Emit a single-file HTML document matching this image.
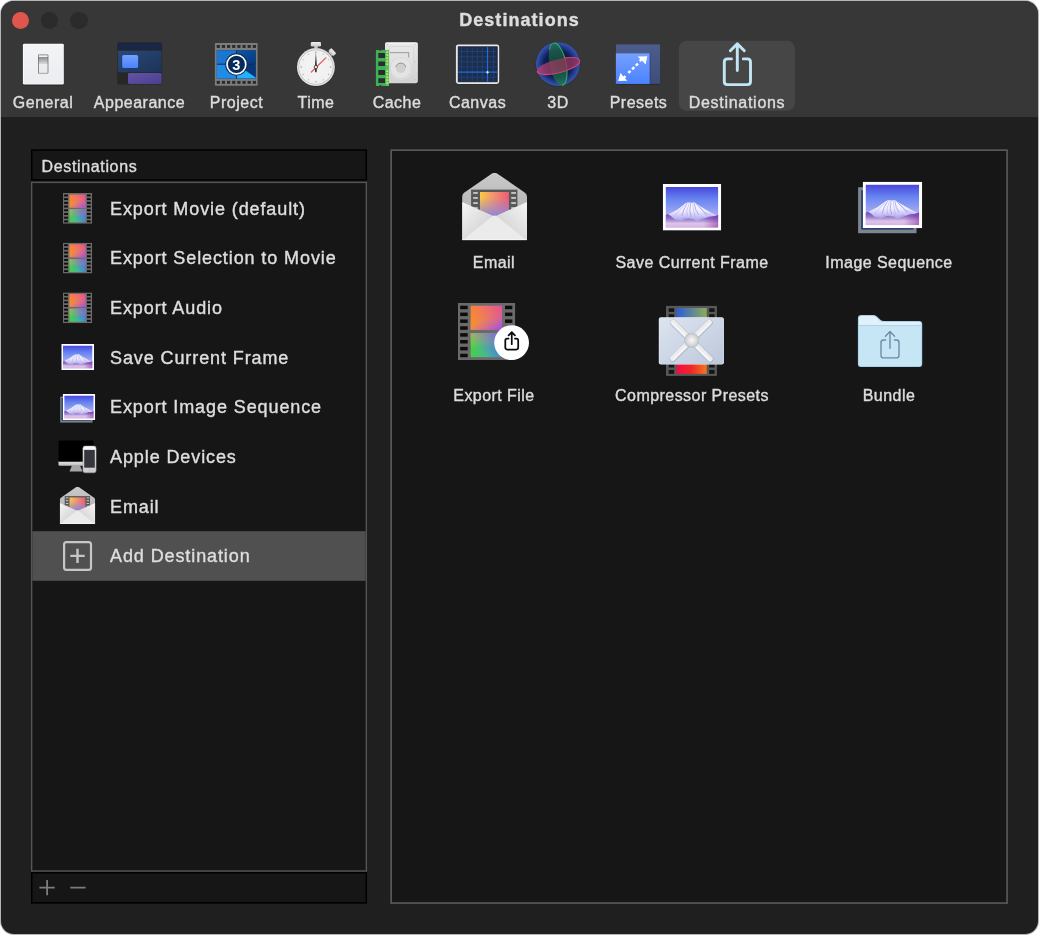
<!DOCTYPE html>
<html lang="en">
<head>
<meta charset="utf-8">
<title>Destinations</title>
<style>
html,body{margin:0;padding:0;}
body{width:1040px;height:936px;background:#fff;overflow:hidden;position:relative;
  font-family:"Liberation Sans",sans-serif;color:#dddddd;-webkit-text-stroke:.4px #dcdcdc;}
.win{position:absolute;left:1px;top:1px;width:1037px;height:933px;border-radius:13px;
  background:#1f1f1f;overflow:hidden;will-change:transform;box-shadow:0 0 0 1px rgba(120,120,120,.55);}
.abs{position:absolute;}
.toolbar{position:absolute;left:0;top:0;width:1037px;height:116px;}
.tl{position:absolute;top:10.5px;width:17.5px;height:17.5px;border-radius:50%;background:#2b2b2b;}
.title{position:absolute;left:0;width:1037px;top:8px;text-align:center;font-weight:bold;font-size:18px;
  line-height:22px;color:#dedede;letter-spacing:1.05px;}
.tlabel{position:absolute;top:92px;width:140px;margin-left:-70px;text-align:center;font-size:16px;line-height:20px;
  color:#dcdcdc;letter-spacing:.5px;white-space:nowrap;}
.sel{position:absolute;left:678px;top:40px;width:116px;height:70px;border-radius:8px;background:#464646;}
.hdr{position:absolute;left:31.5px;top:149.5px;width:333px;height:29px;}
.hdr span{position:absolute;left:9px;top:6px;font-size:16px;line-height:20px;letter-spacing:.45px;color:#dcdcdc;}
.list{position:absolute;left:31.5px;top:182.5px;width:333px;height:687px;}
.row{position:absolute;left:0;width:333px;height:49.7px;}
.row.on{}
.row .t{position:absolute;left:77.5px;top:13px;font-size:18px;line-height:24px;color:#dedede;white-space:nowrap;letter-spacing:.9px;}
.ftr{position:absolute;left:31.5px;top:872.5px;width:333px;height:29px;}
.right{position:absolute;left:391px;top:150px;width:614px;height:751px;}
.glabel{position:absolute;width:220px;margin-left:-110px;text-align:center;font-size:16px;line-height:20px;color:#dcdcdc;
  letter-spacing:.45px;white-space:nowrap;}
svg{position:absolute;overflow:visible;}
</style>
</head>
<body>
<div class="win">
  <svg class="bg" width="1040" height="936" viewBox="0 0 1040 936" style="left:-1px;top:-1px;">
    <rect x="0" y="0" width="1040" height="117" fill="#373737"/>
    <rect x="678.8" y="40.8" width="116.2" height="70" rx="8" fill="#464646"/>
    <rect x="31.75" y="150.05" width="334.55" height="29.9" fill="#161616" stroke="#000000" stroke-width="1.5"/>
    <rect x="31.65" y="182.4" width="334.7" height="688.6" fill="#161616" stroke="#555555" stroke-width="1.4"/>
    <rect x="32.35" y="531.2" width="333.3" height="49.6" fill="#505050"/>
    <rect x="31.75" y="872.75" width="334.55" height="30.15" fill="#161616" stroke="#000000" stroke-width="1.5"/>
    <rect x="391.15" y="150.15" width="615.9" height="752.9" fill="#161616" stroke="#575757" stroke-width="1.7"/>
  </svg>
  <div class="toolbar">
    <div class="tl" style="left:10.7px;background:#e0554e;"></div>
    <div class="tl" style="left:39.9px;"></div>
    <div class="tl" style="left:69.1px;"></div>
    <div class="title">Destinations</div>
    <!--TOOLBAR-ICONS-->
    <div class="tlabel" style="left:42px;">General</div>
    <div class="tlabel" style="left:138.5px;">Appearance</div>
    <div class="tlabel" style="left:235.5px;">Project</div>
    <div class="tlabel" style="left:315px;">Time</div>
    <div class="tlabel" style="left:396px;">Cache</div>
    <div class="tlabel" style="left:476.5px;">Canvas</div>
    <div class="tlabel" style="left:557px;">3D</div>
    <div class="tlabel" style="left:637.5px;">Presets</div>
    <div class="tlabel" style="left:736px;letter-spacing:.72px;">Destinations</div>
  </div>

  <div class="hdr"><span style="letter-spacing:.65px;">Destinations</span></div>
  <div class="list">
    <div class="row" style="top:0px;"><div class="t">Export Movie (default)</div></div>
    <div class="row" style="top:49.7px;"><div class="t">Export Selection to Movie</div></div>
    <div class="row" style="top:99.4px;"><div class="t">Export Audio</div></div>
    <div class="row" style="top:149.1px;"><div class="t">Save Current Frame</div></div>
    <div class="row" style="top:198.8px;"><div class="t">Export Image Sequence</div></div>
    <div class="row" style="top:248.5px;"><div class="t">Apple Devices</div></div>
    <div class="row" style="top:298.2px;"><div class="t">Email</div></div>
    <div class="row on" style="top:347.9px;"><div class="t">Add Destination</div></div>
    <!--LIST-ICONS-->
  </div>
  <div class="ftr">
    <!--FOOTER-ICONS-->
  </div>

  <div class="right">
    <!--GRID-ICONS-->
    <div class="glabel" style="left:102px;top:101.5px;">Email</div>
    <div class="glabel" style="left:300px;top:101.5px;">Save Current Frame</div>
    <div class="glabel" style="left:497px;top:101.5px;">Image Sequence</div>
    <div class="glabel" style="left:102px;top:235px;">Export File</div>
    <div class="glabel" style="left:300px;top:235px;">Compressor Presets</div>
    <div class="glabel" style="left:497px;top:235px;">Bundle</div>
  </div>
<svg class="ov" width="1040" height="936" viewBox="0 0 1040 936" style="left:-1px;top:-1px;">
<defs>
  <linearGradient id="gPlate" x1="0" y1="0" x2="0" y2="1"><stop offset="0" stop-color="#f3f4f6"/><stop offset="1" stop-color="#ebedf0"/></linearGradient>
  <linearGradient id="gSw" x1="0" y1="0" x2="0" y2="1"><stop offset="0" stop-color="#fafafa"/><stop offset=".07" stop-color="#f4f4f4"/><stop offset=".1" stop-color="#8a8d90"/><stop offset=".48" stop-color="#d4d7d9"/><stop offset=".5" stop-color="#ececec"/><stop offset="1" stop-color="#eaeaea"/></linearGradient>
  <linearGradient id="gApMid" x1="0" y1="0" x2="1" y2="1"><stop offset="0" stop-color="#284a78"/><stop offset="1" stop-color="#1c3358"/></linearGradient>
  <linearGradient id="gBlue" x1="0" y1="0" x2="0" y2="1"><stop offset="0" stop-color="#76a0ff"/><stop offset="1" stop-color="#4a82ff"/></linearGradient>
  <linearGradient id="gPurp" x1="0" y1="0" x2="1" y2="1"><stop offset="0" stop-color="#6453a4"/><stop offset="1" stop-color="#4b3f90"/></linearGradient>
  <linearGradient id="gPrBack" x1="0" y1="0" x2="0" y2="1"><stop offset="0" stop-color="#4c5d8c"/><stop offset="1" stop-color="#3d4d7c"/></linearGradient>
  <linearGradient id="gTR" x1="0" y1="0" x2="1" y2="1"><stop offset="0" stop-color="#0d58a8"/><stop offset="1" stop-color="#063878"/></linearGradient>
  <radialGradient id="gSph" cx=".5" cy=".5" r=".5"><stop offset="0" stop-color="#081036"/><stop offset=".62" stop-color="#0f1d54"/><stop offset=".88" stop-color="#2a4498"/><stop offset="1" stop-color="#3856b6"/></radialGradient>
  <linearGradient id="gGreenE" x1="0" y1="0" x2="0" y2="1"><stop offset="0" stop-color="#266c54" stop-opacity=".8"/><stop offset=".5" stop-color="#124c36" stop-opacity=".85"/><stop offset="1" stop-color="#237a54" stop-opacity=".8"/></linearGradient>
  <linearGradient id="gPinkE" x1="0" y1="0" x2="1" y2="0"><stop offset="0" stop-color="#b84074" stop-opacity=".78"/><stop offset=".5" stop-color="#8c3c5a" stop-opacity=".78"/><stop offset="1" stop-color="#9c305c" stop-opacity=".78"/></linearGradient>
  <radialGradient id="gFace" cx=".5" cy=".5" r=".5"><stop offset="0" stop-color="#f4f4f4"/><stop offset=".86" stop-color="#f0f0f0"/><stop offset=".9" stop-color="#c4c4c4"/><stop offset=".95" stop-color="#e6e6e6"/><stop offset="1" stop-color="#c8c8c8"/></radialGradient>
  <linearGradient id="gKnob" x1="0" y1="0" x2="0" y2="1"><stop offset="0" stop-color="#f2f2f2"/><stop offset="1" stop-color="#c8c8c8"/></linearGradient>
  <linearGradient id="gHdd" x1="0" y1="0" x2="0" y2="1"><stop offset="0" stop-color="#e8e8e8"/><stop offset="1" stop-color="#d2d2d2"/></linearGradient>
  <linearGradient id="gHdd2" x1="0" y1="0" x2="0" y2="1"><stop offset="0" stop-color="#e6e6e6"/><stop offset="1" stop-color="#dadada"/></linearGradient>
  <!-- film frames -->
  <linearGradient id="gFt1" x1="0" y1="0" x2="1" y2="0"><stop offset="0" stop-color="#fd8036"/><stop offset=".45" stop-color="#f06e6e"/><stop offset="1" stop-color="#e24e98"/></linearGradient>
  <linearGradient id="gFt2" x1=".2" y1="0" x2=".9" y2="1"><stop offset="0" stop-color="#ff9030" stop-opacity="0"/><stop offset=".45" stop-color="#d060b0" stop-opacity="0"/><stop offset="1" stop-color="#a24ee8" stop-opacity="1"/></linearGradient>
  <linearGradient id="gFt3" x1="0" y1="0" x2="0" y2="1"><stop offset="0" stop-color="#e8a020" stop-opacity="0"/><stop offset="1" stop-color="#e8a828" stop-opacity=".55"/></linearGradient>
  <linearGradient id="gFb1" x1="0" y1="0" x2="1" y2="0"><stop offset="0" stop-color="#46d048"/><stop offset=".5" stop-color="#48b890"/><stop offset="1" stop-color="#3a96c8"/></linearGradient>
  <linearGradient id="gFb2" x1="0" y1="0" x2="0" y2="1"><stop offset="0" stop-color="#c8c838" stop-opacity=".9"/><stop offset=".6" stop-color="#c8c838" stop-opacity="0"/></linearGradient>
  <linearGradient id="gFb3" x1="1" y1="0" x2=".3" y2=".7"><stop offset="0" stop-color="#7060e8" stop-opacity="1"/><stop offset="1" stop-color="#6070e0" stop-opacity="0"/></linearGradient>
  <!-- photo -->
  <linearGradient id="gSky" x1="0" y1="0" x2="0" y2="1"><stop offset="0" stop-color="#4848de"/><stop offset=".3" stop-color="#6684f0"/><stop offset=".62" stop-color="#9ca4f4"/><stop offset="1" stop-color="#c8b4f0"/></linearGradient>
  <linearGradient id="gHill" x1="0" y1="0" x2="0" y2="1"><stop offset="0" stop-color="#6650b8"/><stop offset=".35" stop-color="#9474c8"/><stop offset=".7" stop-color="#dcc4e8"/><stop offset="1" stop-color="#d8b4e0"/></linearGradient>
  <linearGradient id="gHillR" x1="0" y1="0" x2="1" y2="0"><stop offset=".72" stop-color="#8028a0" stop-opacity="0"/><stop offset="1" stop-color="#802aa0" stop-opacity=".55"/></linearGradient>
  <linearGradient id="gSnow" x1="0" y1="0" x2="0" y2="1"><stop offset="0" stop-color="#ffffff"/><stop offset=".5" stop-color="#eeecff"/><stop offset="1" stop-color="#b4acea"/></linearGradient>
  <!-- envelope -->
  <linearGradient id="gEnvBack" x1="0" y1="0" x2="0" y2="1"><stop offset="0" stop-color="#cacaca"/><stop offset="1" stop-color="#a4a4a4"/></linearGradient>
  <linearGradient id="gEnvL" x1="0" y1="0" x2="1" y2="1"><stop offset="0" stop-color="#f6f6f6"/><stop offset="1" stop-color="#c6c6c6"/></linearGradient>
  <linearGradient id="gEnvR" x1="1" y1="0" x2="0" y2="1"><stop offset="0" stop-color="#f6f6f6"/><stop offset="1" stop-color="#c6c6c6"/></linearGradient>
  <linearGradient id="gEnvImg" x1="0" y1="0" x2="1" y2="0"><stop offset="0" stop-color="#fcc844"/><stop offset=".5" stop-color="#f09070"/><stop offset="1" stop-color="#f05a74"/></linearGradient>
  <linearGradient id="gEnvImg2" x1="0" y1="0" x2="0" y2="1"><stop offset=".2" stop-color="#9488d8" stop-opacity="0"/><stop offset=".95" stop-color="#8e86da" stop-opacity="1"/></linearGradient>
  <!-- compressor -->
  <linearGradient id="gCpl" x1="0" y1="0" x2="1" y2="1"><stop offset="0" stop-color="#dde4f0"/><stop offset="1" stop-color="#bcc8dc"/></linearGradient>
  <linearGradient id="gCtop" x1="0" y1="0" x2="1" y2="0"><stop offset="0" stop-color="#2c5cd8"/><stop offset="1" stop-color="#8cac58"/></linearGradient>
  <linearGradient id="gCbot" x1="0" y1="0" x2="1" y2="0"><stop offset="0" stop-color="#f00c44"/><stop offset=".5" stop-color="#f02828"/><stop offset="1" stop-color="#f07820"/></linearGradient>
  <linearGradient id="gArm" x1="0" y1="0" x2="0" y2="1"><stop offset="0" stop-color="#fafafa"/><stop offset=".5" stop-color="#e6e6e6"/><stop offset="1" stop-color="#c2c6cc"/></linearGradient>
  <radialGradient id="gHub" cx=".5" cy=".5" r=".5"><stop offset="0" stop-color="#f8f8f8"/><stop offset=".7" stop-color="#d8d8d8"/><stop offset="1" stop-color="#c0c4c8"/></radialGradient>
  <!-- monitor -->
  <linearGradient id="gChin" x1="0" y1="0" x2="0" y2="1"><stop offset="0" stop-color="#e8e8e8"/><stop offset="1" stop-color="#bcbcbc"/></linearGradient>
  <linearGradient id="gPhone" x1="0" y1="0" x2="0" y2="1"><stop offset="0" stop-color="#fafafa"/><stop offset="1" stop-color="#c8c8c8"/></linearGradient>

  <!-- film symbol: 58x57 -->
  <symbol id="film" viewBox="0 0 58 57" preserveAspectRatio="none">
    <rect x="0" y="0" width="58" height="57" fill="#6a6a6a"/>
    <g fill="#0c0c0c">
      <rect x="2.2" y="2.8" width="7.6" height="3.5"/><rect x="2.2" y="9.65" width="7.6" height="3.5"/><rect x="2.2" y="16.5" width="7.6" height="3.5"/><rect x="2.2" y="23.35" width="7.6" height="3.5"/><rect x="2.2" y="30.2" width="7.6" height="3.5"/><rect x="2.2" y="37.05" width="7.6" height="3.5"/><rect x="2.2" y="43.9" width="7.6" height="3.5"/><rect x="2.2" y="50.75" width="7.6" height="3.5"/>
      <rect x="47.6" y="2.8" width="7.4" height="3.5"/><rect x="47.6" y="9.65" width="7.4" height="3.5"/><rect x="47.6" y="16.5" width="7.4" height="3.5"/><rect x="47.6" y="23.35" width="7.4" height="3.5"/><rect x="47.6" y="30.2" width="7.4" height="3.5"/><rect x="47.6" y="37.05" width="7.4" height="3.5"/><rect x="47.6" y="43.9" width="7.4" height="3.5"/><rect x="47.6" y="50.75" width="7.4" height="3.5"/>
    </g>
    <rect x="12.8" y="2.8" width="31.8" height="24.2" fill="url(#gFt1)"/>
    <rect x="12.8" y="2.8" width="31.8" height="24.2" fill="url(#gFt3)"/>
    <rect x="12.8" y="2.8" width="31.8" height="24.2" fill="url(#gFt2)"/>
    <rect x="12.8" y="30.2" width="31.8" height="24" fill="url(#gFb1)"/>
    <rect x="12.8" y="30.2" width="31.8" height="24" fill="url(#gFb2)"/>
    <rect x="12.8" y="30.2" width="31.8" height="24" fill="url(#gFb3)"/>
  </symbol>

  <!-- photo symbol: 58.4 x 46.7 -->
  <symbol id="photo" viewBox="0 0 58.4 46.7" preserveAspectRatio="none">
    <rect x="0" y="0" width="58.4" height="46.7" fill="#ffffff"/>
    <rect x="3" y="3.1" width="52.3" height="40.5" fill="url(#gSky)"/>
    <path d="M3 43.6 V31.2 L5.2 30.2 L8 32 L12 35.5 L18 36.5 L24 34.5 L30 35 L34 37 L40 35 L46 33 L52 32 L55.3 31 V43.6 Z" fill="url(#gHill)"/>
    <path d="M3 43.6 V31.2 L5.2 30.2 L8 32 L12 35.5 L18 36.5 L24 34.5 L30 35 L34 37 L40 35 L46 33 L52 32 L55.3 31 V43.6 Z" fill="url(#gHillR)"/>
    <path d="M5.5 30.3 L14 26 L22.5 19.6 L24.6 18.7 L30 18.9 L31.4 18.4 L33.5 19.8 L41 24.5 L48 28.5 L54.2 31.3 L50 32.2 L46 32.2 L42.5 33.6 L39.5 33 L36.5 34.8 L33.6 35.8 L31.5 34 L29 34.6 L26.5 33.2 L23.5 34.2 L21 33 L17.5 35.2 L14 34.6 L11.5 34.6 L8.5 32 Z" fill="url(#gSnow)"/>
    <path d="M24.6 19 L21 26 L19 32 M28 19 L27 27 L28.5 33 M31.4 18.6 L33 26 L36 31 M33.5 20 L40 27 L44 31.5" stroke="#9c98e6" stroke-width=".9" fill="none" opacity=".85"/>
    <path d="M22.5 20.5 L15 28 L11 33 M30 19 L30.5 25 L32.5 33.5 M26.5 19 L24 27 L24.5 33 M36 22 L42 28.5 L48 31.5" stroke="#b4b0ee" stroke-width=".8" fill="none" opacity=".8"/>
  </symbol>

  <!-- envelope symbol: 65 x 67.6 -->
  <symbol id="env" viewBox="0 0 65 67.6" preserveAspectRatio="none">
    <path d="M0 24 Q0 21.4 2 20 L29.6 1 Q32.5 -1 35.4 1 L63 20 Q65 21.4 65 24 V67.6 H0 Z" fill="url(#gEnvBack)"/>
    <rect x="9" y="16.9" width="46.4" height="35" fill="#585858"/>
    <g fill="#c4c4c4"><rect x="11.1" y="19.3" width="4.6" height="1.9"/><rect x="11.1" y="24.3" width="4.6" height="1.9"/><rect x="11.1" y="29.4" width="4.6" height="1.9"/><rect x="11.1" y="34.4" width="4.6" height="1.9"/>
    <rect x="49.2" y="19.3" width="4.7" height="1.9"/><rect x="49.2" y="24.3" width="4.7" height="1.9"/><rect x="49.2" y="29.4" width="4.7" height="1.9"/><rect x="49.2" y="34.4" width="4.7" height="1.9"/></g>
    <rect x="17.9" y="19.3" width="29" height="26" fill="url(#gEnvImg)"/>
    <rect x="17.9" y="19.3" width="29" height="26" fill="url(#gEnvImg2)"/>
    <path d="M0 29.3 L34 44.5 L0 67.6 Z" fill="url(#gEnvL)"/>
    <path d="M65 29.3 L31 44.5 L65 67.6 Z" fill="url(#gEnvR)"/>
    <path d="M0.3 67.6 L30 43.8 Q32.5 41.6 35 43.8 L64.7 67.6 Z" fill="#ebebeb"/>
    <rect x="0" y="66.6" width="65" height="1" fill="#f8f8f8"/>
  </symbol>
</defs>
<!-- ===== toolbar icons ===== -->
<g id="ic-general">
  <rect x="22.9" y="44.6" width="40.9" height="40.8" rx="1.4" fill="#1c1c1c" opacity=".8"/>
  <rect x="22.9" y="43.8" width="40.9" height="40.8" rx="1.4" fill="#ffffff"/>
  <rect x="23.7" y="44.6" width="39.3" height="39.2" rx="1.2" fill="url(#gPlate)"/>
  <rect x="38" y="54.6" width="10.4" height="19" rx=".8" fill="#6f7276"/>
  <rect x="38.8" y="55.3" width="8.8" height="17.6" fill="url(#gSw)"/>
</g>
<g id="ic-appearance">
  <rect x="117.2" y="42.3" width="44.9" height="42.3" rx="2.2" fill="#272727"/>
  <path d="M117.8 44.6 Q117.8 42.9 119.6 42.9 H159.8 Q161.6 42.9 161.6 44.6 V49.6 H117.8 Z" fill="#182746"/>
  <rect x="117.8" y="50.7" width="43.8" height="21.5" rx="1" fill="url(#gApMid)"/>
  <rect x="122.2" y="54.9" width="15.9" height="13.1" rx="1.6" fill="url(#gBlue)"/>
  <rect x="128" y="73.1" width="33.6" height="10.8" rx="1.4" fill="url(#gPurp)"/>
</g>
<g id="ic-project">
  <rect x="214.9" y="42.9" width="42.7" height="42.8" rx=".8" fill="#7c7c7c"/>
  <g fill="#2a2a2a">
    <rect x="216.7" y="45" width="3.2" height="2.9"/><rect x="221.85" y="45" width="3.2" height="2.9"/><rect x="227" y="45" width="3.2" height="2.9"/><rect x="232.15" y="45" width="3.2" height="2.9"/><rect x="237.3" y="45" width="3.2" height="2.9"/><rect x="242.45" y="45" width="3.2" height="2.9"/><rect x="247.6" y="45" width="3.2" height="2.9"/><rect x="252.75" y="45" width="3.2" height="2.9"/>
    <rect x="216.7" y="80.9" width="3.2" height="2.9"/><rect x="221.85" y="80.9" width="3.2" height="2.9"/><rect x="227" y="80.9" width="3.2" height="2.9"/><rect x="232.15" y="80.9" width="3.2" height="2.9"/><rect x="237.3" y="80.9" width="3.2" height="2.9"/><rect x="242.45" y="80.9" width="3.2" height="2.9"/><rect x="247.6" y="80.9" width="3.2" height="2.9"/><rect x="252.75" y="80.9" width="3.2" height="2.9"/>
  </g>
  <rect x="216.8" y="50.3" width="38.9" height="28.3" fill="#0a2c5c"/>
  <rect x="216.8" y="50.3" width="19.1" height="13.4" fill="#1a76cf"/>
  <rect x="236.9" y="50.3" width="18.8" height="13.4" fill="url(#gTR)"/>
  <rect x="216.8" y="64.7" width="19.1" height="13.9" fill="#1f8ce6"/>
  <rect x="236.9" y="64.7" width="18.8" height="13.9" fill="#073878"/>
  <path d="M236.9 78.6 V70.5 H245.5 L255.7 77.6 V78.6 Z" fill="#22b0ff"/>
  <circle cx="236.4" cy="64.4" r="11.2" fill="#0a2c5c"/>
  <circle cx="236.4" cy="64.4" r="9.4" fill="#082a5a" stroke="#ffffff" stroke-width="1.7"/>
  <text x="236.4" y="69.7" text-anchor="middle" font-family="Liberation Sans, sans-serif" font-weight="bold" font-size="14.5" fill="#ffffff">3</text>
</g>
<g id="ic-time">
  <rect x="314.3" y="45.5" width="3.4" height="4" fill="#c8c8c8"/>
  <rect x="310.8" y="42" width="10.2" height="4.6" rx="1.3" fill="url(#gKnob)"/>
  <g transform="rotate(47.5 315.9 67.1)"><rect x="313.4" y="44.6" width="5" height="5" fill="#c4c4c4"/><rect x="312.2" y="42.8" width="7.4" height="4.2" rx="1" fill="url(#gKnob)"/></g>
  <circle cx="315.9" cy="67.3" r="19.4" fill="#2a2a2a"/>
  <circle cx="315.9" cy="67.1" r="19" fill="url(#gFace)"/>
  <g fill="#a8a8a8">
    <circle cx="315.9" cy="52.4" r=".8"/><circle cx="323.25" cy="54.37" r=".6"/><circle cx="328.63" cy="59.75" r=".6"/><circle cx="330.6" cy="67.1" r=".8"/><circle cx="328.63" cy="74.45" r=".6"/><circle cx="323.25" cy="79.83" r=".6"/><circle cx="315.9" cy="81.8" r=".8"/><circle cx="308.55" cy="79.83" r=".6"/><circle cx="303.17" cy="74.45" r=".6"/><circle cx="301.2" cy="67.1" r=".8"/><circle cx="303.17" cy="59.75" r=".6"/><circle cx="308.55" cy="54.37" r=".6"/>
  </g>
  <path d="M311.4 72 L325.8 57.9" stroke="#ee5858" stroke-width="1.3" stroke-linecap="round"/>
  <path d="M315.9 52.2 L317 67 L316.7 72.2 H315.1 L314.8 67 Z" fill="#3a3a3a"/>
  <circle cx="315.9" cy="67.1" r="1.7" fill="#e8e8e8" stroke="#3a3a3a" stroke-width=".9"/>
</g>
<g id="ic-cache">
  <rect x="385" y="42.3" width="32.9" height="41" rx="2.2" fill="url(#gHdd)"/>
  <rect x="385.4" y="42.7" width="32.1" height="1" rx=".5" fill="#f8f8f8"/>
  <path d="M389.5 47.8 Q389.5 46.5 390.8 46.5 H412.4 Q413.7 46.5 413.7 47.8 V67 Q413.7 80.5 400.8 80.5 Q389.5 80.5 389.5 67 Z" fill="url(#gHdd2)" stroke="#cfcfcf" stroke-width=".6"/>
  <path d="M389.8 52.6 H408.6 V57.5" stroke="#a8a8a8" stroke-width="1.3" fill="none"/>
  <circle cx="400.8" cy="68" r="10.6" fill="#e4e4e4" stroke="#d0d0d0" stroke-width=".6"/>
  <circle cx="400.8" cy="68" r="5" fill="#cfcfcf"/>
  <path d="M395.9 67.2 A5 5 0 0 1 405.7 67.2" stroke="#8c8c8c" stroke-width=".9" fill="none"/>
  <g fill="#b8b8b8"><circle cx="387.3" cy="44.5" r=".6"/><circle cx="415.2" cy="44.5" r=".6"/><circle cx="415.2" cy="62" r=".6"/><circle cx="415.2" cy="79.8" r=".6"/></g>
  <path d="M375.9 49.9 H379.2 L379.7 50.8 H381 L381.5 49.9 H388.9 V86 H381.5 L381 85.1 H379.7 L379.2 86 H375.9 Z" fill="#3cb155"/>
  <rect x="385.6" y="49.9" width="3.3" height="36.1" fill="#52c463"/>
  <g fill="#2b2b2b"><rect x="378.3" y="53.1" width="6.7" height="4.9" rx=".4"/><rect x="378.3" y="61.4" width="6.7" height="4.7" rx=".4"/><rect x="378.3" y="70.1" width="6.7" height="4.9" rx=".4"/><rect x="378.3" y="78.2" width="6.7" height="4.9" rx=".4"/></g>
  <g fill="#d8dc58"><rect x="386.3" y="51.3" width="2" height="1.7"/><rect x="386.3" y="54.3" width="2" height="1.7"/><rect x="386.3" y="57.3" width="2" height="1.7"/><rect x="386.3" y="60.3" width="2" height="1.7"/><rect x="386.3" y="63.3" width="2" height="1.7"/><rect x="386.3" y="70.3" width="2" height="1.7"/><rect x="386.3" y="73.3" width="2" height="1.7"/><rect x="386.3" y="76.3" width="2" height="1.7"/><rect x="386.3" y="79.3" width="2" height="1.7"/><rect x="386.3" y="82.3" width="2" height="1.7"/></g>
</g>
<g id="ic-canvas">
  <rect x="455.9" y="45.1" width="43.3" height="39.5" rx="2.4" fill="#222" opacity=".7"/>
  <rect x="455.9" y="44.4" width="43.3" height="39.5" rx="2.4" fill="#e7e7e7"/>
  <rect x="458.2" y="46.8" width="39" height="35" fill="#1d2e4b"/>
  <g stroke="#244f96" stroke-width=".9" opacity=".6">
    <path d="M461.5 46.8 V81.8 M467.2 46.8 V81.8 M472.3 46.8 V81.8 M477.4 46.8 V81.8 M482.4 46.8 V81.8 M493.5 46.8 V81.8"/>
    <path d="M458.2 51.5 H497.2 M458.2 56.7 H497.2 M458.2 61.8 H497.2 M458.2 67 H497.2 M458.2 77.3 H497.2"/>
  </g>
  <rect x="458.2" y="46.8" width="39" height="35" fill="none" stroke="#101c34" stroke-width=".8"/>
  <path d="M487.5 46.8 V81.8 M458.2 72.2 H497.2" stroke="#1a6be4" stroke-width="1.2"/>
  <ellipse cx="487.5" cy="72.2" rx="1" ry="1.3" fill="#e8f0ff"/>
</g>
<g id="ic-3d">
  <circle cx="557.9" cy="64.3" r="22.3" fill="#2a2a2a"/>
  <circle cx="557.9" cy="64.1" r="21.9" fill="url(#gSph)"/>
  <g transform="rotate(-11.5 557.9 64.3)">
    <ellipse cx="557.9" cy="64.3" rx="8.2" ry="21.6" fill="url(#gGreenE)"/>
    <path d="M557.9 42.7 A8.2 21.6 0 0 1 557.9 85.9" fill="none" stroke="#30bc54" stroke-width=".95"/>
    <path d="M557.9 42.7 A8.2 21.6 0 0 0 552.5 48" fill="none" stroke="#30bc54" stroke-width=".95"/>
  </g>
  <g transform="rotate(-14 558.3 66)">
    <ellipse cx="558.3" cy="66" rx="22" ry="6.8" fill="url(#gPinkE)"/>
    <path d="M536.3 66 A22 6.8 0 0 0 580.3 66 A22 6.8 0 0 0 566 59.6" fill="none" stroke="#ea4874" stroke-width=".95"/>
  </g>
</g>
<g id="ic-presets">
  <rect x="615.9" y="45" width="44.1" height="39.6" fill="#1e1e1e" opacity=".7"/>
  <rect x="615.9" y="44.4" width="44.1" height="39.5" fill="url(#gPrBack)"/>
  <rect x="615.9" y="53.4" width="33.9" height="30.5" fill="url(#gBlue)"/>
  <rect x="649.8" y="53.4" width=".8" height="30.5" fill="#35446c"/>
  <g fill="#ffffff">
    <path d="M647.3 56.2 L637.7 56.5 L640.2 58.9 L638.9 60.2 L640.6 62 L642 60.6 L645.6 64.4 Z"/>
    <path d="M618.1 80.9 L627.4 80.8 L625 78.4 L626.4 77 L624.6 75.2 L623.2 76.6 L620.6 72.8 Z"/>
    <rect x="-1.25" y="-1.5" width="2.5" height="3" transform="translate(636.9 64.6) rotate(45)"/>
    <rect x="-1.25" y="-1.5" width="2.5" height="3" transform="translate(633.2 68.2) rotate(45)"/>
    <rect x="-1.25" y="-1.5" width="2.5" height="3" transform="translate(629.4 71.9) rotate(45)"/>
  </g>
</g>
<g id="ic-dest" fill="none" stroke="#c3e6f4" stroke-width="2.9" stroke-linecap="round" stroke-linejoin="round">
  <path d="M731.5 58.9 H727.4 Q724.3 58.9 724.3 62 V81.5 Q724.3 84.6 727.4 84.6 H747.4 Q750.5 84.6 750.5 81.5 V62 Q750.5 58.9 747.4 58.9 H743.3"/>
  <path d="M737.3 70.6 V44.2 M730.3 50.7 L737.3 43.7 L744.3 50.7"/>
</g>
<!-- ===== list icons ===== -->
<use href="#film" x="63" y="193" width="29.2" height="30.8"/>
<use href="#film" x="63" y="242.7" width="29.2" height="30.8"/>
<use href="#film" x="63" y="292.4" width="29.2" height="30.8"/>
<use href="#photo" x="61.3" y="344" width="32.7" height="26.1"/>
<g id="ic-seq-s">
  <rect x="60.2" y="396.6" width="32.3" height="26" fill="#7a8088"/>
  <rect x="61.6" y="398" width="29.5" height="22.5" fill="#1c3868"/>
  <use href="#photo" x="62.7" y="394" width="32.5" height="26"/>
</g>
<g id="ic-devices">
  <path d="M69.5 471.6 L72 465.5 H80 L82.5 471.6 Z" fill="#a6a6a6"/>
  <path d="M58.5 461 H93.6 V464.4 Q93.6 465.8 92.2 465.8 H59.9 Q58.5 465.8 58.5 464.4 Z" fill="url(#gChin)"/>
  <path d="M58.5 441.8 Q58.5 440.4 59.9 440.4 H92.2 Q93.6 440.4 93.6 441.8 V461.7 H58.5 Z" fill="#000000"/>
  <rect x="82.9" y="446" width="13.2" height="26.8" rx="2.2" fill="url(#gPhone)" stroke="#9a9a9a" stroke-width=".5"/>
  <rect x="84.2" y="449.9" width="10.6" height="17.8" fill="#34383e"/>
  <circle cx="89.5" cy="470.3" r="1" fill="#d0d0d0" stroke="#a8a8a8" stroke-width=".3"/>
</g>
<use href="#env" x="59.8" y="486.8" width="35.4" height="37.2"/>
<g id="ic-add" fill="none" stroke="#c6c6c6">
  <rect x="64.1" y="542.1" width="26.9" height="27.7" rx="2.4" stroke-width="2.2"/>
  <path d="M77.5 548.7 V563.1 M70.3 555.9 H84.7" stroke-width="2.4"/>
</g>
<!-- footer +/- -->
<g id="ic-footer" stroke="#7c7c7c" stroke-width="1.8" fill="none">
  <path d="M47.1 879.9 V895.3 M39.4 887.6 H54.8"/>
  <path d="M70.2 887.7 H85.6"/>
</g>
<!-- ===== grid icons ===== -->
<use href="#env" x="462.1" y="172.7" width="64.9" height="67.6"/>
<use href="#photo" x="662.8" y="183.9" width="58.4" height="46.7"/>
<g id="ic-seq">
  <rect x="858.1" y="187.2" width="58.4" height="46" fill="#7e858c"/>
  <rect x="861.2" y="190.2" width="52.3" height="39.4" fill="#1b3a6e"/>
  <use href="#photo" x="862.7" y="181.7" width="59.5" height="46.5"/>
</g>
<g id="ic-export">
  <use href="#film" x="458" y="302.9" width="57.3" height="57.1"/>
  <circle cx="511.6" cy="342.7" r="17.4" fill="#ffffff"/>
  <g fill="none" stroke="#0a0a0a" stroke-width="1.75" stroke-linecap="round" stroke-linejoin="round">
    <path d="M508.6 338.6 H507.2 Q505.3 338.6 505.3 340.5 V347.6 Q505.3 349.5 507.2 349.5 H516.3 Q518.2 349.5 518.2 347.6 V340.5 Q518.2 338.6 516.3 338.6 H514.9"/>
    <path d="M511.75 344.2 V332.6 M508.6 335.3 L511.75 332.2 L514.9 335.3"/>
  </g>
</g>
<g id="ic-compressor">
  <rect x="666" y="305.9" width="50.9" height="70" fill="#585858"/>
  <g fill="#141414">
    <rect x="668.7" y="308.3" width="5.5" height="3.6"/><rect x="668.7" y="314.2" width="5.5" height="3.6"/><rect x="668.7" y="364.3" width="5.5" height="3.2"/><rect x="668.7" y="369.9" width="5.5" height="3.9"/>
    <rect x="709.2" y="308.3" width="5.4" height="3.6"/><rect x="709.2" y="314.2" width="5.4" height="3.6"/><rect x="709.2" y="364.3" width="5.4" height="3.2"/><rect x="709.2" y="369.9" width="5.4" height="3.9"/>
  </g>
  <rect x="676.5" y="308" width="30.2" height="12" fill="url(#gCtop)"/>
  <rect x="676.5" y="362" width="30.2" height="11.9" fill="url(#gCbot)"/>
  <rect x="658.8" y="317.3" width="65.1" height="47.1" rx="2.2" fill="#e9eef7"/>
  <rect x="659.4" y="318" width="63.9" height="45.9" rx="1.8" fill="url(#gCpl)"/>
  <g stroke-linecap="round">
    <path d="M673.4 322.8 L710.2 359.2 M709.4 322.7 L672.8 358.8" stroke="#a4aec2" stroke-width="6.6" opacity=".75"/>
    <path d="M673.2 322.4 L710 358.8 M709.2 322.3 L672.6 358.4" stroke="#ececec" stroke-width="5.4"/>
    <path d="M672.4 323.2 L709.2 359.6 M710 323.1 L673.4 359.2" stroke="#ffffff" stroke-width="1.6" opacity=".55"/>
  </g>
  <circle cx="691.7" cy="340.4" r="7.6" fill="#b4bccb" opacity=".8"/>
  <circle cx="691.7" cy="340.2" r="7.1" fill="url(#gHub)"/>
</g>
<g id="ic-bundle">
  <path d="M857.9 318.3 Q857.9 314.9 861.3 314.9 H873 Q875.2 314.9 876.6 316.3 L880.4 319.8 Q881.8 321 884 321 H919.2 Q922.2 321 922.2 324 V364 Q922.2 367 919.2 367 H860.9 Q857.9 367 857.9 364 Z" fill="#a9d1e8"/>
  <path d="M858.9 318.5 Q858.9 315.9 861.5 315.9 H872.8 Q874.8 315.9 876 317.1 L879.8 320.7 Q881.2 322 883.6 322 H919 Q921.2 322 921.2 324.2 V330 H858.9 Z" fill="#e0f1fb"/>
  <path d="M858.9 325.4 H921.2 V363.8 Q921.2 366 919 366 H861.1 Q858.9 366 858.9 363.8 Z" fill="#c7e6f5"/>
  <rect x="858.9" y="325" width="62.3" height=".9" fill="#a9d1e8"/>
  <g fill="none" stroke="#6b8aa6" stroke-width="1.35" stroke-linecap="round" stroke-linejoin="round">
    <path d="M885.6 340 H883.4 Q881 340 881 342.4 V355.5 Q881 357.9 883.4 357.9 H896.6 Q899 357.9 899 355.5 V342.4 Q899 340 896.6 340 H894.4"/>
    <path d="M890 348.3 V331.9 M885.4 336.2 L890 331.6 L894.6 336.2"/>
  </g>
</g>
</svg>
</div>
</body>
</html>
